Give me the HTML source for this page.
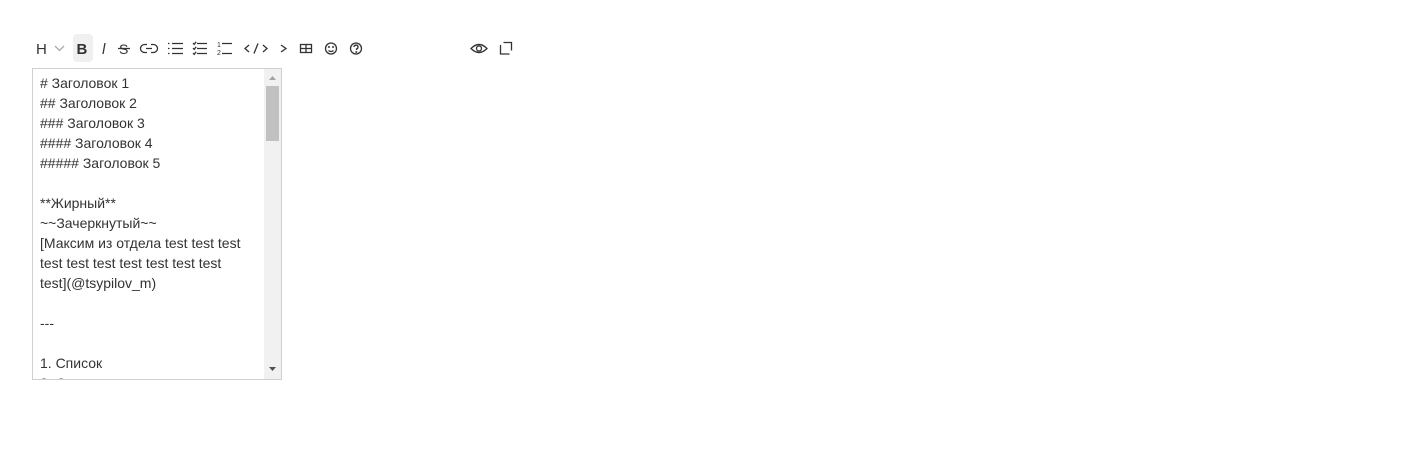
<!DOCTYPE html>
<html><head><meta charset="utf-8"><style>
body{margin:0;width:1408px;height:452px;background:#fff;font-family:"Liberation Sans","DejaVu Sans",sans-serif;position:relative;overflow:hidden;color:#333}
.ta{position:absolute;left:32px;top:68px;width:248px;height:310px;border:1px solid #d0d0d0;overflow:hidden;background:#fff}
.tx{position:absolute;left:7px;top:4px;font-size:14px;line-height:20px;color:#333;white-space:pre}
.sb{position:absolute;right:0;top:0;width:17px;height:100%;background:#f1f1f1}
.th{position:absolute;left:2px;top:17px;width:13px;height:55px;background:#c1c1c1}
</style></head><body>
<div style="position:absolute;left:73px;top:34px;width:20px;height:28px;background:#f0f0f0;border-radius:4px"></div>
<svg width="1408" height="100" style="position:absolute;left:0;top:0" fill="none" stroke="#333" stroke-width="1.3">
<text x="36" y="54" font-size="15" fill="#333" stroke="none" font-family="Liberation Sans">H</text>
<path d="M55 46l4.5 4.5 4.5-4.5" stroke="#aaa"/>
<text x="76.5" y="54" font-size="15" font-weight="bold" fill="#333" stroke="none" font-family="Liberation Sans">B</text>
<path d="M105 43l-2 11"/>
<text x="119" y="54" font-size="14" fill="#333" stroke="none" font-family="Liberation Sans">S</text>
<path d="M118 48.5h12"/>
<path d="M147 44.5h-2.5a4 4 0 0 0 0 8h2.5M151 44.5h2.5a4 4 0 0 1 0 8h-2.5M146 48.5h6"/>
<path d="M172 43.5h11M172 48.5h11M172 53.5h11M168 43.5h1.5M168 48.5h1.5M168 53.5h1.5"/>
<path d="M197 43.5h10M197 48.5h10M197 53.5h10M193 43l1.2 1.4 2-2.6M193 48l1.2 1.4 2-2.6M193 53l1.2 1.4 2-2.6"/>
<text x="217" y="47" font-size="7" fill="#333" stroke="none">1</text><text x="217" y="55" font-size="7" fill="#333" stroke="none">2</text>
<path d="M222 43.5h10M222 53.5h10"/>
<path d="M249 45l-4 3.5 4 3.5M263 45l4 3.5-4 3.5M258 43.5l-4 10"/>
<path d="M281 45l5 3.5-5 3.5"/>
<rect x="300.5" y="44.5" width="11" height="8"/><path d="M300.5 48.5h11M306 44.5v8"/>
<circle cx="331" cy="48.5" r="5.5"/><circle cx="329" cy="47" r=".4"/><circle cx="333" cy="47" r=".4"/><path d="M328.5 50.5q2.5 2 5 0"/>
<circle cx="356" cy="48.5" r="5.5"/><path d="M354 47a2 2 0 1 1 2.5 2v1"/><circle cx="356.3" cy="52" r=".4"/>
<path d="M471 48.5q8-8 16 0q-8 8-16 0z"/><circle cx="479" cy="48.5" r="2.5"/>
<path d="M500.5 45v9h9M503.5 42.5h8v8"/>
</svg>
<div class="ta"><div class="tx"># Заголовок 1
## Заголовок 2
### Заголовок 3
#### Заголовок 4
##### Заголовок 5

**Жирный**
~~Зачеркнутый~~
[Максим из отдела test test test
test test test test test test test
test](@tsypilov_m)

---

1. Список
2. Список</div>
<div class="sb"><div class="th"></div>
<svg width="17" height="310" style="position:absolute;left:0;top:0"><path d="M5 11l3.5-4 3.5 4z" fill="#a3a3a3"/><path d="M5 298l3.5 4 3.5-4z" fill="#505050"/></svg></div></div>
</body></html>
